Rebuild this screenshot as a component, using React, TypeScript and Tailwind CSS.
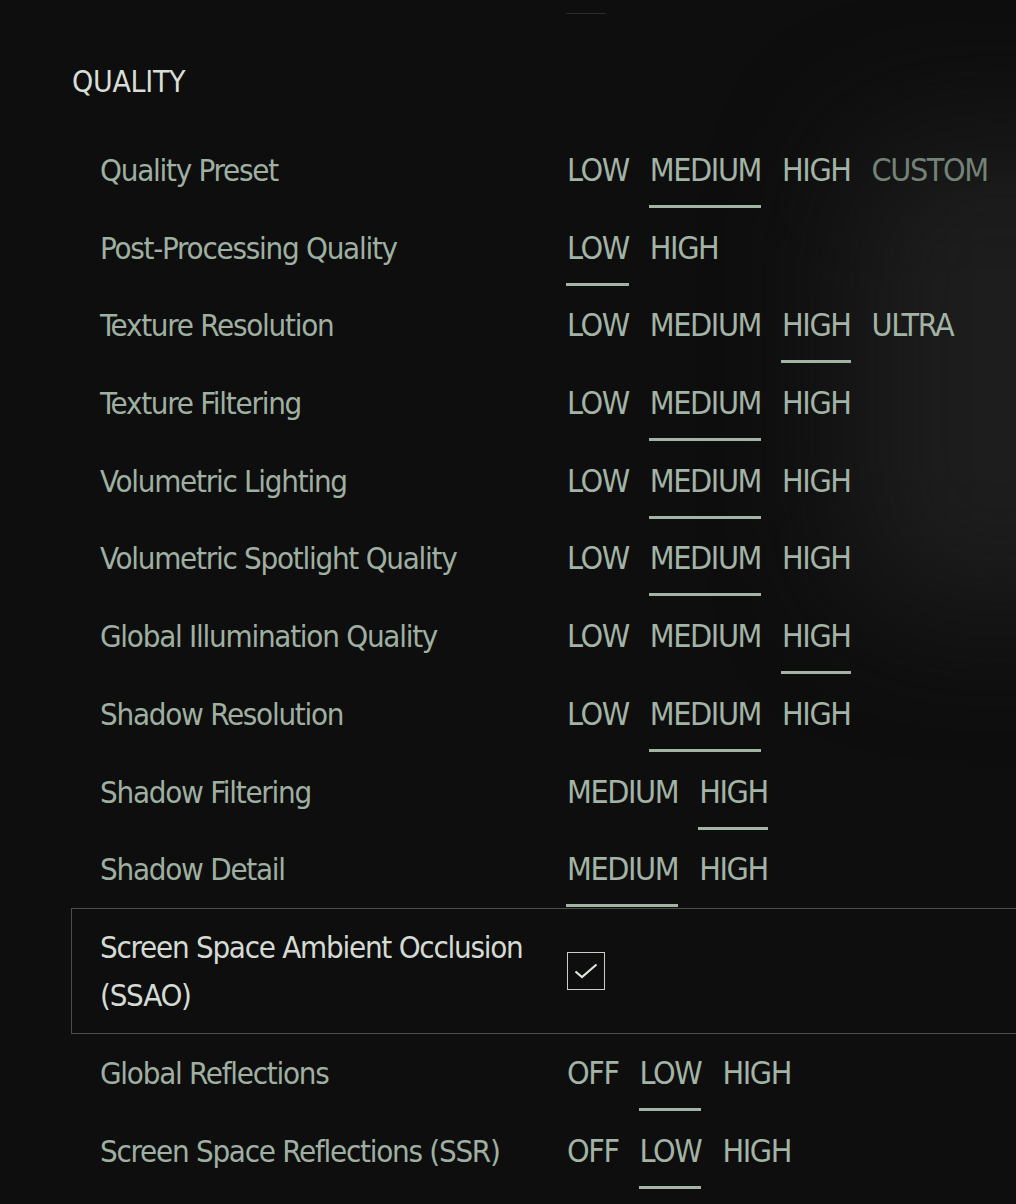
import { Fragment } from "react";

type Row = {
  label: string;
  options: string[];
  selected: number;
  dim?: number;
};

const rows: Row[] = [
  { label: "Quality Preset", options: ["LOW", "MEDIUM", "HIGH", "CUSTOM"], selected: 1, dim: 3 },
  { label: "Post-Processing Quality", options: ["LOW", "HIGH"], selected: 0 },
  { label: "Texture Resolution", options: ["LOW", "MEDIUM", "HIGH", "ULTRA"], selected: 2 },
  { label: "Texture Filtering", options: ["LOW", "MEDIUM", "HIGH"], selected: 1 },
  { label: "Volumetric Lighting", options: ["LOW", "MEDIUM", "HIGH"], selected: 1 },
  { label: "Volumetric Spotlight Quality", options: ["LOW", "MEDIUM", "HIGH"], selected: 1 },
  { label: "Global Illumination Quality", options: ["LOW", "MEDIUM", "HIGH"], selected: 2 },
  { label: "Shadow Resolution", options: ["LOW", "MEDIUM", "HIGH"], selected: 1 },
  { label: "Shadow Filtering", options: ["MEDIUM", "HIGH"], selected: 1 },
  { label: "Shadow Detail", options: ["MEDIUM", "HIGH"], selected: 0 },
];

const reflections: Row[] = [
  { label: "Global Reflections", options: ["OFF", "LOW", "HIGH"], selected: 1 },
  { label: "Screen Space Reflections (SSR)", options: ["OFF", "LOW", "HIGH"], selected: 1 },
];

function OptionRow({ row }: { row: Row }) {
  return (
    <div className="flex items-start h-[77.7px] pt-[19px] pl-[29px]">
      <div className="w-[467px] shrink-0 text-[31px] leading-[40px] tracking-[-1.25px] text-[#9fb0a2]">
        {row.label}
      </div>
      <div className="flex gap-[21px]">
        {row.options.map((opt, i) => (
          <div key={opt} className="flex flex-col">
            <span
              className={
                "text-[32px] leading-[40px] tracking-[-1.4px] " +
                (row.dim === i ? "text-[#748378]" : "text-[#a3b4a6]")
              }
            >
              {opt}
            </span>
            <div
              className={
                "mt-[15px] h-[3px] -ml-px " +
                (row.selected === i ? "bg-[#a3b4a6]" : "bg-transparent")
              }
            />
          </div>
        ))}
      </div>
    </div>
  );
}

export default function App() {
  return (
    <div
      className="relative w-full min-h-[1204px] overflow-hidden bg-[#0e0e0e] pt-[13px]"
      style={{ fontFamily: '"DejaVu Sans Condensed", "Liberation Sans Narrow", "Liberation Sans", sans-serif' }}
    >
      <div className="absolute left-[850px] top-[140px] w-[300px] h-[470px] rounded-[80px] bg-[#1d1d1d] blur-3xl" />

      <div className="relative">
        <div className="ml-[566px] w-[40px] h-px bg-[#2c2c2c]" />

        <h2 className="mt-[48px] ml-[72px] text-[30px] leading-[40px] tracking-[-0.3px] text-[#d8ddd6]">
          QUALITY
        </h2>

        <div className="mt-[29px] pl-[71px]">
          {rows.map((r) => (
            <OptionRow key={r.label} row={r} />
          ))}

          <div className="flex items-center border border-r-0 border-[#4a4d4a] pl-[28px] pt-[14px] pb-[14px]">
            <div className="w-[467px] shrink-0 pr-[10px] text-[31px] leading-[48px] tracking-[-1.25px] text-[#d4dbd3]">
              Screen Space Ambient Occlusion (SSAO)
            </div>
            <div className="w-[38px] h-[38px] border-[1.5px] border-[#c9cfc7] flex items-center justify-center">
              <svg width="24" height="16" viewBox="0 0 24 16" fill="none" className="shrink-0">
                <path d="M1.5 8.5 L8 14 L22.5 1.5" stroke="#dfe4dd" strokeWidth="2.2" />
              </svg>
            </div>
          </div>

          {reflections.map((r) => (
            <Fragment key={r.label}>
              <OptionRow row={r} />
            </Fragment>
          ))}
        </div>
      </div>
    </div>
  );
}
